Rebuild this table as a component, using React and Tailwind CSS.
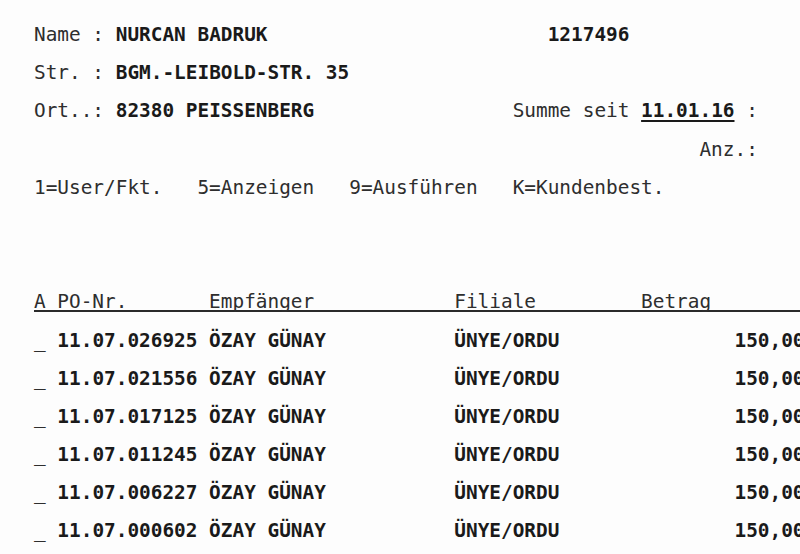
const mono = { fontFamily: '"DejaVu Sans Mono", "Liberation Mono", monospace' }

function B({ children, u }) {
  return (
    <span className={`font-bold text-[#1a1a1a] ${u ? 'underline decoration-2 underline-offset-[3px]' : ''}`}>
      {children}
    </span>
  )
}

const rows = ['026925', '021556', '017125', '011245', '006227', '000602']

export default function App() {
  const line = 'h-[38.2px] leading-[38.2px] whitespace-pre'
  return (
    <div
      className="w-[800px] h-[554px] overflow-hidden bg-[#fdfdfd] pt-[16px] pl-[34px] text-[19.4px] text-[#2e2e2e]"
      style={mono}
    >
      <div className={line}>
        {'Name : '}<B>NURCAN BADRUK</B>{' '.repeat(24)}<B>1217496</B>
      </div>
      <div className={line}>
        {'Str. : '}<B>BGM.-LEIBOLD-STR. 35</B>
      </div>
      <div className={line}>
        {'Ort..: '}<B>82380 PEISSENBERG</B>{' '.repeat(17)}{'Summe seit '}<B u>11.01.16</B>{' :'}
      </div>
      <div className={line}>{' '.repeat(57)}Anz.:</div>
      <div className={line}>{'1=User/Fkt.   5=Anzeigen   9=Ausführen   K=Kundenbest.'}</div>
      <div className={line}> </div>
      <div className={line}> </div>
      <div className="h-[29px] mb-[9.2px] leading-[38.2px] whitespace-pre border-b-2 border-[#2a2a2a]">
        {'A PO-Nr.' + ' '.repeat(7) + 'Empfänger' + ' '.repeat(12) + 'Filiale' + ' '.repeat(9) + 'Betrag'}
      </div>
      {rows.map((n) => (
        <div key={n} className={line}>
          {'_ '}
          <B>{`11.07.${n} ÖZAY GÜNAY${' '.repeat(11)}ÜNYE/ORDU${' '.repeat(15)}150,00`}</B>
        </div>
      ))}
    </div>
  )
}
